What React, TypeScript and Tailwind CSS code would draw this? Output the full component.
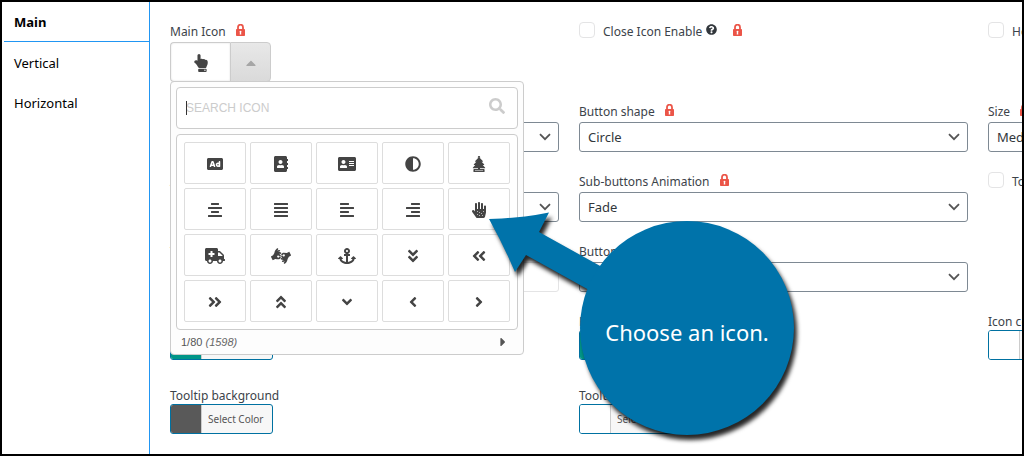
import React, { useState } from "react";
import type { IconType } from "react-icons";
import {
  FaAd,
  FaAddressBook,
  FaAddressCard,
  FaAdjust,
  FaAlignCenter,
  FaAlignJustify,
  FaAlignLeft,
  FaAlignRight,
  FaAllergies,
  FaAmbulance,
  FaAmericanSignLanguageInterpreting,
  FaAnchor,
  FaAngleDoubleDown,
  FaAngleDoubleLeft,
  FaAngleDoubleRight,
  FaAngleDoubleUp,
  FaAngleDown,
  FaAngleLeft,
  FaAngleRight,
  FaCaretRight,
  FaCaretUp,
  FaHandPointUp,
  FaQuestionCircle,
  FaSearch,
} from "react-icons/fa";

type PickerIcon = { name: string; Icon: IconType };

const AirFreshener: IconType = ({ className }) => (
  <svg viewBox="0 0 384 512" fill="currentColor" className={className} aria-hidden="true">
    <path d="M192 0c-22 0-38 16-38 36 0 10 4 18 10 24L70 160c-10 12-4 26 12 26h26l-78 76c-10 12-4 26 12 26h30L0 364c-12 14-4 30 14 30h146v22H34c-12 0-20 8-20 20v56c0 12 8 20 20 20h316c12 0 20-8 20-20v-56c0-12-8-20-20-20H224v-22h146c18 0 26-16 14-30l-72-76h30c16 0 22-14 12-26l-78-76h26c16 0 22-14 12-26L220 60c6-6 10-14 10-24 0-20-16-36-38-36zm0 24a13 13 0 1 1 0 26 13 13 0 0 1 0-26z" />
    <path d="M62 446h260v36H62z" fill="#a3a3a3" />
  </svg>
);

const ICONS: PickerIcon[] = [
  { name: "ad", Icon: FaAd },
  { name: "address-book", Icon: FaAddressBook },
  { name: "address-card", Icon: FaAddressCard },
  { name: "adjust", Icon: FaAdjust },
  { name: "air-freshener", Icon: AirFreshener },
  { name: "align-center", Icon: FaAlignCenter },
  { name: "align-justify", Icon: FaAlignJustify },
  { name: "align-left", Icon: FaAlignLeft },
  { name: "align-right", Icon: FaAlignRight },
  { name: "allergies", Icon: FaAllergies },
  { name: "ambulance", Icon: FaAmbulance },
  { name: "asl-interpreting", Icon: FaAmericanSignLanguageInterpreting },
  { name: "anchor", Icon: FaAnchor },
  { name: "angle-double-down", Icon: FaAngleDoubleDown },
  { name: "angle-double-left", Icon: FaAngleDoubleLeft },
  { name: "angle-double-right", Icon: FaAngleDoubleRight },
  { name: "angle-double-up", Icon: FaAngleDoubleUp },
  { name: "angle-down", Icon: FaAngleDown },
  { name: "angle-left", Icon: FaAngleLeft },
  { name: "angle-right", Icon: FaAngleRight },
];

const TABS = ["Main", "Vertical", "Horizontal"];

const Lock = () => (
  <svg viewBox="0 0 9 12" className="mb-1 h-3 w-[9px] shrink-0" aria-hidden="true">
    <path d="M2 5.5V3.2a2.5 2.5 0 0 1 5 0v2.3" fill="none" stroke="#eb5548" strokeWidth="1.8" />
    <rect x="0" y="5" width="9" height="7" rx="0.8" fill="#eb5548" />
    <path d="M4.5 6.7a1 1 0 0 1 .6 1.8l.2 1.9H3.7l.2-1.9a1 1 0 0 1 .6-1.8z" fill="#fff" />
  </svg>
);

const LABEL_ROW = "flex h-5 items-center gap-2.5 whitespace-nowrap text-[#3c434a]";

function SelectField({ id, label, value, locked }: { id: string; label: string; value: string; locked?: boolean }) {
  return (
    <div>
      <div className={LABEL_ROW}>
        <label htmlFor={id}>{label}</label>
        {locked && <Lock />}
      </div>
      <div className="grid items-center">
        <select
          id={id}
          defaultValue={value}
          className="col-start-1 row-start-1 h-[30px] w-full appearance-none rounded-[3px] border border-[#7e8993] bg-white px-2 text-[13px] text-[#32373c]"
        >
          <option>{value}</option>
        </select>
        <svg viewBox="0 0 12 8" className="pointer-events-none col-start-1 row-start-1 mr-2 h-2 w-3 justify-self-end" aria-hidden="true">
          <path d="M1 1.2l5 5 5-5" fill="none" stroke="#555" strokeWidth="1.8" />
        </svg>
      </div>
    </div>
  );
}

function CheckField({ id, label, help, locked }: { id: string; label: string; help?: boolean; locked?: boolean }) {
  return (
    <div className="flex h-5 items-center gap-2 whitespace-nowrap text-[#3c434a]">
      <input
        id={id}
        type="checkbox"
        className="mb-1 size-4 shrink-0 appearance-none rounded-[4px] border border-[#e4e4e5] bg-white"
      />
      <label htmlFor={id}>{label}</label>
      {help && <FaQuestionCircle className="mr-2 mb-1.5 -ml-1 size-[11px] text-[#32373c]" />}
      {locked && <Lock />}
    </div>
  );
}

function ColorField({ id, label, swatch }: { id: string; label: string; swatch: string }) {
  return (
    <div>
      <label htmlFor={id} className="flex h-[18px] items-center pt-0.5 whitespace-nowrap text-[#3c434a]">
        {label}
      </label>
      <button
        id={id}
        type="button"
        className="flex h-[30px] overflow-hidden rounded-[3px] border border-[#0071a1] bg-[#f7f7f7] text-[10px] whitespace-nowrap text-[#555]"
      >
        <span className="h-full w-[30px]" style={{ backgroundColor: swatch }} />
        <span className="flex h-full items-center border-l border-[#ccc] pr-2 pl-1.5">Select Color</span>
      </button>
    </div>
  );
}

function IconPicker() {
  const [selected, setSelected] = useState("");

  return (
    <div className="relative">
      <div className={LABEL_ROW}>
        <span id="main-icon-label">Main Icon</span>
        <Lock />
      </div>
      <div className="flex h-10" role="group" aria-labelledby="main-icon-label">
        <button
          type="button"
          aria-label="Selected icon"
          className="flex w-[60px] items-center justify-center rounded-l-[4px] border border-r-0 border-[#ccc] bg-white pt-0.5 shadow-[inset_0_0_2px_#ddd]"
        >
          <FaHandPointUp className="size-[18px] text-[#444]" />
        </button>
        <button
          type="button"
          aria-label="Toggle icon list"
          className="flex w-[41px] items-center justify-center rounded-r-[4px] border border-[#ccc] bg-linear-to-b from-[#e8e8e8] to-[#dadada] pt-0.5"
        >
          <FaCaretUp className="size-4 text-[#a6a6a6]" />
        </button>
      </div>

      <div className="absolute top-[59px] left-0 z-10 rounded-[4px] border border-[#ccc] bg-[#fdfdfd] px-[5px] pt-[5px] font-['Liberation_Sans',sans-serif]">
        <div className="relative flex h-[42px] items-center rounded-[4px] border border-[#ccc] bg-white px-3">
          <input
            type="text"
            aria-label="Search icon"
            placeholder="SEARCH ICON"
            className="-ml-[3px] min-w-0 flex-1 text-[12px] outline-none placeholder:text-[#ccc]"
          />
          <span className="absolute top-[13px] left-[9px] h-[14px] w-px bg-[#333]" />
          <FaSearch className="mb-1 size-4 text-[#ccc]" />
        </div>
        <div className="mt-[5px] grid grid-cols-[repeat(5,62px)] gap-1 rounded-[4px] border border-[#ccc] bg-white p-[7px]">
          {ICONS.map(({ name, Icon }) => (
            <button
              key={name}
              type="button"
              title={name}
              aria-pressed={selected === name}
              onClick={() => setSelected(name)}
              className="flex h-[42px] items-center justify-center rounded-[2px] border border-[#ddd] bg-white pt-0.5 text-[#444]"
            >
              <Icon className="h-4 w-5" />
            </button>
          ))}
        </div>
        <div className="flex h-6 items-center justify-between pr-2 pl-[5px] text-[11px] text-[#555]">
          <span>
            1/80 <em className="text-[#666]">(1598)</em>
          </span>
          <button type="button" aria-label="Next page">
            <FaCaretRight className="size-3.5" />
          </button>
        </div>
      </div>
    </div>
  );
}

// Arrow and bubble are one shape so they cast a single shadow.
const Callout = () => (
  <div className="pointer-events-none absolute top-[210px] left-[487px] z-20 flex h-[236px] w-[318px]">
    <svg viewBox="0 0 318 236" className="absolute size-full overflow-visible drop-shadow-[3px_5px_2px_rgba(0,0,0,0.85)]" aria-hidden="true">
      <path d="M0 7Q34 6 60 0.5L50 20 113 55 100 78 37 43 26 60Q14 32 0 7z" fill="#0073aa" />
      <circle cx="198" cy="116" r="107" fill="#0073aa" />
    </svg>
    <p className="relative mt-[104px] ml-[91px] flex h-8 w-[214px] items-center justify-center text-[22px] whitespace-nowrap text-white">
      Choose an icon.
    </p>
  </div>
);

export default function App() {
  const [tab, setTab] = useState("Main");

  return (
    <div className="relative flex min-h-screen overflow-hidden border-2 border-black bg-white font-['Noto_Sans',sans-serif] text-[12px] leading-[18px]">
      <nav className="w-[148px] shrink-0 border-r border-[#2196f3] pl-0.5 text-[13px] text-black">
        {TABS.map((name) => (
          <button
            key={name}
            type="button"
            onClick={() => setTab(name)}
            className={`flex h-10 w-full items-center border-b pl-2.5 ${
              tab === name ? "border-[#2196f3] font-bold" : "border-transparent pt-0.5"
            }`}
          >
            {name}
          </button>
        ))}
      </nav>

      <main className="min-w-0 flex-1 overflow-hidden p-5">
        <div className="grid w-full min-w-[1207px] grid-cols-3 gap-5">
          <IconPicker />
          <CheckField id="close-icon" label="Close Icon Enable" help locked />
          <CheckField id="hold-open" label="Hold open" />

          <SelectField id="position" label="Position" value="Bottom Right" />
          <SelectField id="shape" label="Button shape" value="Circle" locked />
          <SelectField id="size" label="Size" value="Medium" locked />

          <SelectField id="animation" label="Animation" value="None" />
          <SelectField id="sub-animation" label="Sub-buttons Animation" value="Fade" locked />
          <CheckField id="tooltip" label="Tooltip" />

          <div>
            <label htmlFor="tooltip-text" className={LABEL_ROW}>
              Text
            </label>
            <input id="tooltip-text" type="text" disabled className="h-[30px] w-full rounded-[3px] border border-[#e4e4e5] bg-white px-2" />
          </div>
          <SelectField id="button-action" label="Button action" value="None" />
        </div>

        <div className="mt-5 grid w-full min-w-[1207px] grid-cols-3 gap-x-5 gap-y-[26px]">
          <ColorField id="button-color" label="Button color" swatch="#009688" />
          <ColorField id="hover-color" label="Hover color" swatch="#009688" />
          <ColorField id="icon-color" label="Icon color" swatch="#ffffff" />
          <ColorField id="tooltip-bg" label="Tooltip background" swatch="#595959" />
          <ColorField id="tooltip-color" label="Tooltip color" swatch="#ffffff" />
        </div>
      </main>

      <Callout />
    </div>
  );
}
